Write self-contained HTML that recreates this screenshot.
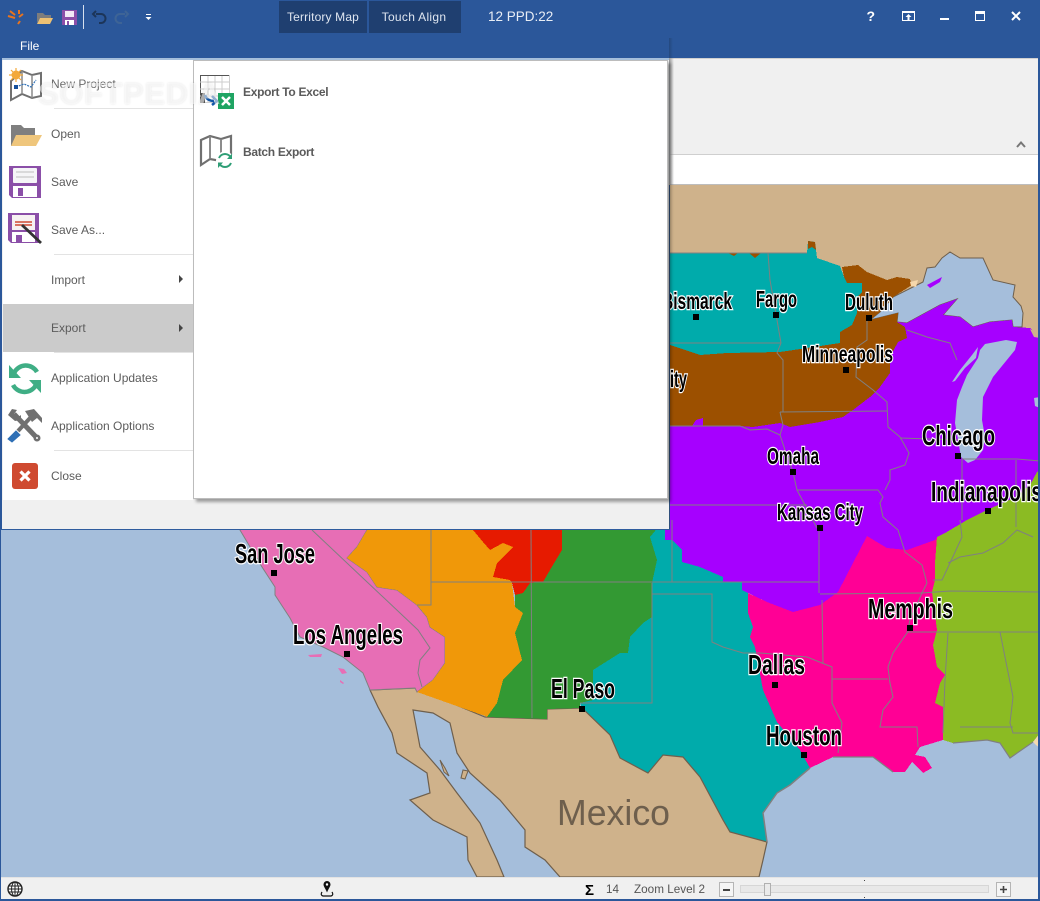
<!DOCTYPE html>
<html><head><meta charset="utf-8"><title>Territory Map</title>
<style>
html,body{margin:0;padding:0;width:1040px;height:901px;overflow:hidden;background:#a5bedb;font-family:"Liberation Sans",sans-serif}
.a{position:absolute}
#stage{position:relative;width:1040px;height:901px;overflow:hidden}
.m{position:absolute;left:51px;font-size:12px;color:#5c5c5c;line-height:14px;white-space:nowrap}
.b{position:absolute;left:243px;font-size:12px;font-weight:bold;color:#5a5a5a;line-height:14px;white-space:nowrap;letter-spacing:-.3px}
.sep{position:absolute;left:54px;width:139px;height:1px;background:#e3e3e3}
.arr{position:absolute;left:179px;width:0;height:0;border-left:4px solid #444;border-top:4px solid transparent;border-bottom:4px solid transparent}
.lbl text{font-family:"Liberation Sans",sans-serif;font-weight:bold;fill:#000;stroke:#fff;stroke-width:2.6px;paint-order:stroke;stroke-linejoin:miter}
.tb{position:absolute;top:1px;height:32px;background:#1f3f70;color:#dfe6f0;font-size:12px;line-height:33px;text-align:center;letter-spacing:.15px}
</style></head><body><div id="stage">

<svg class="a" style="left:0;top:0" width="1040" height="901" viewBox="0 0 1040 901">
<rect width="1040" height="901" fill="#a5bedb"/>
<rect x="0" y="184" width="1040" height="175" fill="#cfb28b"/>
<!-- Lake Superior -->
<polygon points="870,320 880,312 893,297 923,282 927,268 935,267 942,258 950,252 960,258 983,258 993,280 1015,285 1013,297 1021,306 1023,313 1022,327 1013,327 1012,320 990,322 973,327 960,317 943,315 957,299 940,305 907,323 897,322 898,313" fill="#a5bedb" stroke="#6e5f4d" stroke-width="1"/>
<!-- teal north -->
<polygon points="660,253 807,253 808,241 815,242 817,258 840,266 844,277 847,283 862,283 862,292 857,297 857,313 852,325 840,332 840,343 807,348 780,352 727,353 700,355 670,345 660,345" fill="#00abab" shape-rendering="crispEdges"/>
<!-- brown -->
<polygon points="660,345 670,345 700,355 727,353 780,352 807,348 840,343 840,332 852,325 857,313 857,297 862,292 862,283 847,283 844,277 842,267 858,265 867,272 887,280 897,277 910,279 912,285 893,297 880,312 870,320 898,313 897,322 905,327 907,338 898,342 890,357 890,373 880,387 870,397 853,410 843,417 820,422 790,427 780,423 753,427 740,428 660,428" fill="#9c5000" shape-rendering="crispEdges"/>
<polygon points="808,241 815,242 816,250 812,247 808,249" fill="#9c5000"/>
<polygon points="728,253 738,253 734,256" fill="#9c5000"/><polygon points="749,253 761,253 755,258" fill="#9c5000"/>
<!-- purple -->
<polygon points="660,426 692,426 696,420 703,418 703,426 740,426 753,427 780,423 790,427 820,422 843,417 853,410 870,397 880,387 890,373 890,357 898,342 907,338 905,327 897,322 907,323 940,305 957,299 943,315 960,317 973,327 990,322 1012,320 1013,327 1030,328 1040,338 1040,470 1037,472 1030,485 1016,497 987,510 967,520 945,533 937,537 935,540 907,550 887,548 867,536 853,563 838,592 820,605 793,612 767,602 742,590 742,582 723,582 723,577 700,567 682,562 682,550 672,540 665,540 660,530" fill="#a600ff" shape-rendering="crispEdges"/>
<!-- Lake Michigan -->
<polygon points="1006,340 1017,342 1015,350 993,377 983,397 982,420 985,437 983,450 975,460 968,463 961,457 955,423 957,400 962,387 967,375 978,358 980,350 985,344" fill="#a5bedb"/>
<polygon points="952,382 960,370 972,355 978,347 976,358 965,368 955,381" fill="#a5bedb"/>
<polygon points="1034,398 1040,397 1040,408 1035,406" fill="#a5bedb"/>
<polygon points="1030,329 1040,334 1040,338 1034,337" fill="#cfb28b"/>
<polygon points="927,285 942,277 940,282 930,288" fill="#a600ff"/>
<polygon points="910,282 918,280 916,287 911,286" fill="#f6d7ab"/>
<!-- green east -->
<polygon points="1040,470 1037,472 1030,485 1016,497 987,510 967,520 945,533 937,537 935,563 935,580 932,592 937,630 933,645 937,667 945,675 940,683 935,703 943,707 943,740 953,743 987,740 1000,743 1010,758 1033,742 1040,733" fill="#8bbb23" shape-rendering="crispEdges"/>
<polygon points="1033,742 1040,733 1040,748 1036,745" fill="#f4d9b1"/>
<!-- hot pink -->
<polygon points="748,593 767,602 793,612 820,605 838,592 853,563 867,536 887,548 907,550 935,540 937,537 935,563 935,580 932,592 937,630 933,645 937,667 945,675 940,683 935,703 943,707 943,740 920,747 915,755 925,757 932,768 923,773 912,762 905,772 893,772 873,757 833,757 810,768 800,750 777,722 763,690 755,647 750,637 753,627 748,613" fill="#ff0095" shape-rendering="crispEdges"/>
<!-- teal south -->
<polygon points="620,653 628,653 630,637 643,623 652,617 652,583 657,560 650,537 652,525 665,530 665,540 672,540 682,550 682,562 700,567 723,577 723,582 742,582 742,590 748,593 748,613 753,627 750,637 755,647 763,690 777,722 800,750 810,768 790,785 777,793 763,813 767,842 730,832 723,820 700,777 683,757 663,755 648,773 620,758 610,735 582,708 580,703 593,700 593,670" fill="#00abab" shape-rendering="crispEdges"/>
<!-- Mexico -->
<polygon points="370,690 415,688 485,717 547,719 547,709 580,708 582,708 610,735 620,758 648,773 663,755 683,757 700,777 723,820 730,832 767,842 763,860 759,877 560,877 545,860 525,847 525,830 500,800 470,773 457,753 450,723 433,713 413,710 420,747 440,770 457,793 480,823 497,860 504,877 477,877 468,860 467,837 433,820 410,800 430,793 427,773 397,753 392,733 378,707" fill="#cfb28b" stroke="#6e5f4d" stroke-width="1.200"/>
<polygon points="440,760 445,768 449,776 444,772" fill="#cfb28b" stroke="#6e5f4d"/>
<polygon points="463,770 468,771 465,779 461,778" fill="#cfb28b" stroke="#6e5f4d"/>
<!-- California -->
<polygon points="237,525 312,525 362,525 367,530 357,547 347,558 367,572 377,587 397,590 417,605 427,617 430,627 445,637 445,663 433,680 417,692 415,688 370,690 363,673 343,657 323,647 300,637 290,618 275,595 275,587 262,567" fill="#e76eb5" stroke="#808080" stroke-width="1"/>
<polygon points="308,655 322,654 321,657 310,657" fill="#e76eb5"/><polygon points="338,668 344,669 347,673 342,674" fill="#e76eb5"/><polygon points="340,680 344,683 343,684 340,682" fill="#e76eb5"/>
<!-- orange -->
<polygon points="362,525 480,525 483,542 490,550 503,543 513,547 497,563 493,577 510,580 512,583 515,607 523,613 515,633 522,660 503,680 497,703 487,717 485,716 417,692 433,680 445,663 445,637 430,627 427,617 417,605 397,590 377,587 367,572 347,558 357,547 367,530" fill="#f09809" shape-rendering="crispEdges"/>
<!-- dark green -->
<polygon points="555,525 660,525 650,537 657,560 652,583 652,617 643,623 630,637 628,653 620,653 593,670 593,700 580,703 580,708 547,709 547,719 487,717 497,703 503,680 522,660 515,633 523,613 515,607 515,593 523,593 530,583 543,582 550,570 562,550 562,530" fill="#339933" shape-rendering="crispEdges"/>
<!-- red -->
<polygon points="473,525 562,525 562,550 550,570 543,582 530,583 523,593 515,595 512,583 510,580 493,577 497,563 513,547 503,543 490,550 483,542 473,530" fill="#e61a00" shape-rendering="crispEdges"/>
<!-- state lines -->
<g fill="none" stroke="#808080" stroke-width="1">
<polyline points="660,253 807,253"/>
<polyline points="768,253 770,280 777,320 781,343 777,353 783,360 783,412"/>
<polyline points="670,343 781,343"/>
<polyline points="780,412 887,411"/>
<polyline points="670,426 740,426 750,430 767,429 780,435 785,450 793,472 797,490 805,505 817,528"/>
<polyline points="780,412 783,425 780,435"/>
<polyline points="867,320 867,340 857,347 856,377 873,390 887,402 888,427 900,437 909,453 905,465 890,470 890,480 885,490"/>
<polyline points="797,490 878,490 883,497 880,503 883,517 898,530 905,552 922,565 927,583 922,593 910,620 907,633 893,653 888,667 890,683 893,697 883,710 880,727 917,727 918,747"/>
<polyline points="900,438 962,440"/>
<polyline points="962,459 962,520"/>
<polyline points="962,459 1017,459 1040,461"/>
<polyline points="1016,460 1016,527"/>
<polyline points="660,505 807,505"/>
<polyline points="907,330 927,337 950,343 957,360"/>
<polyline points="819,528 819,593"/>
<polyline points="620,582 819,582"/>
<polyline points="672,520 672,582"/>
<polyline points="652,583 652,703 620,703"/>
<polyline points="652,594 712,594 712,642 723,647 743,653 760,653 807,657 832,667 832,703 842,723 838,753"/>
<polyline points="820,594 922,593"/>
<polyline points="822,600 823,663"/>
<polyline points="832,679 888,679"/>
<polyline points="907,632 1040,632"/>
<polyline points="922,593 950,591 1040,592"/>
<polyline points="948,633 945,680 943,733"/>
<polyline points="1000,632 1013,697 1010,723 1013,733 1040,733"/>
<polyline points="960,727 1013,727"/>
<polyline points="948,563 960,557 983,553 1003,543 1017,530 1033,537"/>
<polyline points="960,520 962,537 950,563 942,580 933,580"/>
<polyline points="312,530 418,630 430,648 420,660 418,673 422,687"/>
<polyline points="417,605 431,605 431,530"/>
<polyline points="431,582 620,582"/>
<polyline points="531,530 532,718"/>
<polyline points="580,703 620,703"/>
<polyline points="810,768 790,785 777,793 763,813 767,842" stroke-width="1.500"/>
<polyline points="833,757 873,757 893,772" stroke-width="1.200"/>
<polyline points="953,743 987,740 1000,743 1010,758 1033,742" stroke-width="1.200"/>
</g>
<text x="557" y="825" font-family="Liberation Sans" font-size="36" fill="#6e5f4d" textLength="113" lengthAdjust="spacingAndGlyphs">Mexico</text>
<!-- city dots -->
<g fill="#000">
<rect x="693" y="314" width="6" height="6"/><rect x="773" y="312" width="6" height="6"/><rect x="866" y="315" width="6" height="6"/><rect x="843" y="367" width="6" height="6"/><rect x="790" y="469" width="6" height="6"/><rect x="955" y="453" width="6" height="6"/><rect x="985" y="508" width="6" height="6"/><rect x="817" y="525" width="6" height="6"/><rect x="271" y="570" width="6" height="6"/><rect x="344" y="651" width="6" height="6"/><rect x="579" y="706" width="6" height="6"/><rect x="907" y="625" width="6" height="6"/><rect x="772" y="682" width="6" height="6"/><rect x="801" y="752" width="6" height="6"/>
</g>
<g class="lbl">
<text x="662" y="309" font-size="23" textLength="70" lengthAdjust="spacingAndGlyphs">Bismarck</text>
<text x="756" y="307" font-size="23" textLength="41" lengthAdjust="spacingAndGlyphs">Fargo</text>
<text x="845" y="310" font-size="23" textLength="48" lengthAdjust="spacingAndGlyphs">Duluth</text>
<text x="802" y="362" font-size="23" textLength="91" lengthAdjust="spacingAndGlyphs">Minneapolis</text>
<text x="670" y="387" font-size="23" textLength="17" lengthAdjust="spacingAndGlyphs">ity</text>
<text x="767" y="464" font-size="23" textLength="52" lengthAdjust="spacingAndGlyphs">Omaha</text>
<text x="777" y="520" font-size="23" textLength="86" lengthAdjust="spacingAndGlyphs">Kansas City</text>
<text x="922" y="445" font-size="28" textLength="73" lengthAdjust="spacingAndGlyphs">Chicago</text>
<text x="931" y="501" font-size="28" textLength="111" lengthAdjust="spacingAndGlyphs">Indianapolis</text>
<text x="235" y="563" font-size="28" textLength="80" lengthAdjust="spacingAndGlyphs">San Jose</text>
<text x="293" y="644" font-size="28" textLength="110" lengthAdjust="spacingAndGlyphs">Los Angeles</text>
<text x="551" y="698" font-size="28" textLength="64" lengthAdjust="spacingAndGlyphs">El Paso</text>
<text x="868" y="618" font-size="28" textLength="85" lengthAdjust="spacingAndGlyphs">Memphis</text>
<text x="748" y="674" font-size="28" textLength="57" lengthAdjust="spacingAndGlyphs">Dallas</text>
<text x="766" y="745" font-size="28" textLength="76" lengthAdjust="spacingAndGlyphs">Houston</text>
</g>
</svg>

<!-- frame side lines -->
<div class="a" style="left:0;top:0;width:1px;height:901px;background:#2b579a"></div>
<div class="a" style="left:1038px;top:0;width:2px;height:901px;background:#2b579a"></div>

<!-- title bar -->
<div class="a" style="left:0;top:0;width:1040px;height:58px;background:#2b579a"></div>
<div class="tb" style="left:279px;width:88px">Territory Map</div>
<div class="tb" style="left:369px;width:92px;text-indent:-2px;letter-spacing:.3px">Touch Align</div>
<div class="a" style="left:488px;top:8px;color:#e8edf5;font-size:13.500px;line-height:18px">12 PPD:22</div>
<div class="a" style="left:20px;top:38px;color:#fff;font-size:12px;line-height:16px">File</div>

<svg class="a" style="left:0;top:0" width="170" height="36" viewBox="0 0 170 36">
<g stroke="#e8741e" stroke-width="2" fill="none"><path d="M8 16 L15 18"/><path d="M10 11 L15 15"/><path d="M20 21 L18 24"/><path d="M23 14 L19 17"/><path d="M19 10 L19 14"/></g>
<path d="M37 13h6l2 2h6v3H40l-3 5z" fill="#7d7d7d"/><path d="M37 24l3-6h13l-3 6z" fill="#eec173"/>
<rect x="62" y="10" width="15" height="15" fill="#8b4fa8"/><rect x="65" y="11" width="9" height="6" fill="#f2e9f6"/><rect x="65" y="20" width="9" height="5" fill="#fff"/><rect x="67" y="21" width="2" height="4" fill="#8b4fa8"/>
<rect x="83" y="5" width="1" height="24" fill="#d6e0ee"/>
<path d="M96 14 h5 a4 4 0 0 1 0 9 h-2 M96 11 l-3 3 3 3" fill="none" stroke="#1c3559" stroke-width="2"/>
<path d="M125 14 h-5 a4 4 0 0 0 0 9 h2 M125 11 l3 3 -3 3" fill="none" stroke="#3e6496" stroke-width="2"/>
<rect x="146" y="14" width="5" height="1" fill="#fff"/><path d="M145.500 17h6l-3 3z" fill="#fff"/>
</svg>

<svg class="a" style="left:860px;top:4px" width="175" height="26" viewBox="860 4 175 26">
<text x="866.500" y="21" font-family="Liberation Sans" font-weight="bold" font-size="14" fill="#fff">?</text>
<rect x="902.500" y="11.500" width="12" height="9" fill="none" stroke="#fff"/><rect x="902" y="11" width="13" height="2" fill="#fff"/><path d="M908.500 14l-3 3h2v3h2v-3h2z" fill="#fff"/>
<rect x="940" y="18" width="9" height="2" fill="#fff"/>
<rect x="975.500" y="11.500" width="9" height="9" fill="none" stroke="#fff"/><rect x="975" y="11" width="10" height="3" fill="#fff"/>
<path d="M1012 12 L1020 20 M1020 12 L1012 20" stroke="#fff" stroke-width="2"/>
</svg>

<!-- ribbon -->
<div class="a" style="left:670px;top:58px;width:368px;height:96px;background:#f0f0f0;border-top:1px solid #d0d0d0;box-sizing:border-box"></div>
<div class="a" style="left:670px;top:154px;width:368px;height:1px;background:#cfcfcf"></div>
<div class="a" style="left:670px;top:155px;width:368px;height:29px;background:#fff"></div>
<div class="a" style="left:670px;top:184px;width:368px;height:1px;background:#bdbdbd"></div>
<svg class="a" style="left:1016px;top:140px" width="10" height="8"><path d="M1 7 L5 2.500 L9 7" fill="none" stroke="#777" stroke-width="2"/></svg>
<div class="a" style="left:669px;top:38px;width:4px;height:20px;background:linear-gradient(90deg,#24497f,#2b579a)"></div>
<div class="a" style="left:669px;top:58px;width:5px;height:127px;background:linear-gradient(90deg,#9a9a9a,rgba(200,200,200,0))"></div>
<div class="a" style="left:669px;top:185px;width:1px;height:345px;background:#2f4f7c"></div>

<!-- backstage -->
<div class="a" style="left:2px;top:60px;width:667px;height:469px;background:#f0f0f0"></div>
<div class="a" style="left:0;top:529px;width:670px;height:1px;background:#2f5c9e"></div>
<div class="a" style="left:0;top:58px;width:2px;height:471px;background:#2b579a"></div>
<div class="a" style="left:3px;top:60px;width:190px;height:440px;background:#fff"></div>
<div class="a" style="left:193px;top:60px;width:475px;height:439px;background:#fff;border:1px solid #bcbcbc;box-sizing:border-box;box-shadow:3px 3px 3px rgba(0,0,0,.35)"></div>
<div class="a" style="left:3px;top:304px;width:190px;height:48px;background:#cbcbcb"></div>
<div class="sep" style="top:108px"></div><div class="sep" style="top:254px"></div><div class="sep" style="top:352px"></div><div class="sep" style="top:450px"></div>
<div class="m" style="top:77px;color:#6b6b6b">New Project</div>
<div class="m" style="top:127px">Open</div>
<div class="m" style="top:175px">Save</div>
<div class="m" style="top:223px">Save As...</div>
<div class="m" style="top:273px">Import</div>
<div class="m" style="top:321px">Export</div>
<div class="m" style="top:371px">Application Updates</div>
<div class="m" style="top:419px">Application Options</div>
<div class="m" style="top:469px">Close</div>
<div class="arr" style="top:275px"></div><div class="arr" style="top:324px"></div>
<div class="b" style="top:85px">Export To Excel</div>
<div class="b" style="top:145px">Batch Export</div>

<svg class="a" style="left:0;top:60px" width="240" height="440" viewBox="0 60 240 440">
<!-- new project -->
<path d="M11 81 L22 71 L32 75 L41 73 V96 L32 98 L22 94 L11 100Z" fill="#fff" stroke="#707070" stroke-width="2"/>
<path d="M22 71V94M32 75V98" stroke="#8a8a8a" stroke-width="1.500"/>
<circle cx="16" cy="75" r="4.500" fill="#f3a93b"/><g stroke="#f3a93b" stroke-width="1.200"><path d="M16 68V82M9 75H23M11 70L21 80M21 70L11 80"/></g>
<path d="M16 87 L24 84 L31 87 L36 80" fill="none" stroke="#2e6fb5" stroke-width="1.200" stroke-dasharray="2 1"/><rect x="14" y="85" width="4" height="4" fill="#17509c"/>
<!-- open -->
<path d="M11 146 V125 h10 l3 3 h11 v7 H17 l-4 11z" fill="#7f7f7f"/><path d="M11 146 l5-11 h26 l-6 11z" fill="#efc67c"/>
<!-- save -->
<path d="M9 166 H41 V198 H12 L9 195Z" fill="#8b4fa8"/><rect x="13" y="168" width="24" height="15" rx="1" fill="#f5f5f7"/><path d="M16 172H34M16 177H34" stroke="#bdbdbd"/><rect x="13" y="186" width="24" height="11" fill="#fff"/><rect x="18" y="188" width="5" height="8" fill="#8b4fa8"/>
<!-- save as -->
<path d="M8 213 H39 V243 H11 L8 240Z" fill="#8b4fa8"/><rect x="12" y="215" width="23" height="15" fill="#f7f2f2"/><path d="M15 222H32M15 225H32" stroke="#d04a32" stroke-width="1.400"/><rect x="12" y="232" width="23" height="10" fill="#fff"/><rect x="16" y="235" width="6" height="7" fill="#8b4fa8"/>
<path d="M22 225 L41 243" stroke="#333" stroke-width="2.800"/>
<!-- updates -->
<path d="M37 372 A13 13 0 0 0 14 373 M13 385 A13 13 0 0 0 36 385" fill="none" stroke="#3fae85" stroke-width="4.500"/>
<path d="M9 365 V378 H21Z" fill="#3fae85"/><path d="M41 393 V380 H29Z" fill="#3fae85"/>
<!-- options -->
<path d="M14 414 L37 438" fill="none" stroke="#707070" stroke-width="5"/>
<path d="M8 415 L12 409 L17 410 L14 414 L17 418 L21 415 L21 420 L15 421Z" fill="#707070"/>
<circle cx="37" cy="438" r="3.500" fill="#707070"/><circle cx="37" cy="438" r="1" fill="#fff"/>
<path d="M31 417 L18 431" stroke="#707070" stroke-width="4"/>
<path d="M25 411 L34 409 L42 418 L42 423 L37 418 L32 422Z" fill="#707070"/>
<path d="M8 439 L16 431 L20 435 L12 442 Z" fill="#2e6fb5" stroke="#2e6fb5" stroke-width="1"/>
<!-- close -->
<rect x="12" y="463" width="26" height="26" rx="3" fill="#cf4a30"/><path d="M20.500 471.500 L29.500 480.500 M29.500 471.500 L20.500 480.500" stroke="#fff" stroke-width="3.200"/>
<!-- excel -->
<rect x="200.500" y="75.500" width="29" height="27" fill="#fff" stroke="#cfcfcf"/>
<path d="M200 75.500H229M200.500 75V103" stroke="#555"/>
<path d="M200 82H229M200 89H229M200 96H229M208 76V102M215 76V102M222 76V102" stroke="#cdcdcd"/>
<rect x="201" y="93" width="4" height="10" fill="#555"/>
<path d="M205 95 q2 6 9 6" fill="none" stroke="#1156a8" stroke-width="2.500"/><path d="M212 96 l5 5 -5 4" fill="none" stroke="#1156a8" stroke-width="2.500"/>
<rect x="218" y="93" width="16" height="16" fill="#1fa463"/><path d="M222 97 L230 105 M230 97 L222 105" stroke="#fff" stroke-width="2.500"/>
<!-- batch -->
<path d="M201 140 L210 136 L221 139 L231 136 V158 L221 161 L210 159 L201 165Z" fill="#fff" stroke="#707070" stroke-width="2.200"/><path d="M210 136V159M221 139V160" stroke="#808080" stroke-width="1.800"/>
<circle cx="225" cy="160.500" r="9" fill="#fff"/>
<path d="M219 158 A6.500 6.500 0 0 1 231 158 M231 163 A6.500 6.500 0 0 1 219 163" fill="none" stroke="#2f9e76" stroke-width="2"/>
<path d="M232 153.500V159H227ZM218 168V162.500H223Z" fill="#2f9e76"/>
</svg>
<div class="a" style="left:38px;top:76px;font-size:31px;font-weight:bold;color:rgba(255,255,255,.55);text-shadow:0 0 2px rgba(0,0,0,.1);letter-spacing:.6px;white-space:nowrap;line-height:36px">SOFTPEDIA</div>

<!-- status bar -->
<div class="a" style="left:1px;top:877px;width:1037px;height:22px;background:#f0f0f0;border-top:1px solid #e3e3e3;box-sizing:border-box"></div>
<div class="a" style="left:0;top:899px;width:1040px;height:2px;background:#2b579a"></div>
<svg class="a" style="left:0;top:877px" width="1040" height="22" viewBox="0 877 1040 22">
<circle cx="15" cy="889" r="7" fill="#fff" stroke="#222" stroke-width="1.400"/><ellipse cx="15" cy="889" rx="3.500" ry="7" fill="none" stroke="#222"/><path d="M8 886H22M8 889H22M8 892H22M15 882V896" stroke="#222"/>
<path d="M327 881 a3.500 3.500 0 0 1 3.500 3.500 c0 2 -2 4 -3.500 8 c-1.500 -4 -3.500 -6 -3.500 -8 a3.500 3.500 0 0 1 3.500 -3.500z" fill="#111"/><circle cx="327" cy="884.500" r="1.200" fill="#fff"/><path d="M322 892 q-2 3 1 4 h8 q3 -1 1 -4" fill="none" stroke="#111" stroke-width="1.200"/>
<text x="585" y="895" font-family="Liberation Sans" font-weight="bold" font-size="15" fill="#000">Σ</text>
<text x="606" y="893" font-family="Liberation Sans" font-size="12" fill="#555" textLength="13" lengthAdjust="spacingAndGlyphs">14</text>
<text x="634" y="893" font-family="Liberation Sans" font-size="12" fill="#555" textLength="71" lengthAdjust="spacingAndGlyphs">Zoom Level 2</text>
<rect x="719.500" y="882.500" width="14" height="14" fill="#f5f5f5" stroke="#b5b5b5"/><rect x="723" y="889" width="7" height="2" fill="#444"/>
<rect x="740.500" y="885.500" width="248" height="7" fill="#e8e8e8" stroke="#d6d6d6"/>
<rect x="764.500" y="883.500" width="6" height="12" fill="#eaeaea" stroke="#b0b0b0"/>
<rect x="996.500" y="882.500" width="14" height="14" fill="#f5f5f5" stroke="#b5b5b5"/><path d="M1000 889.500H1007M1003.500 886V893" stroke="#444" stroke-width="1.600"/>
<rect x="864" y="880" width="1" height="1" fill="#444"/><rect x="864" y="897" width="1" height="1" fill="#444"/>
</svg>
</div></body></html>
